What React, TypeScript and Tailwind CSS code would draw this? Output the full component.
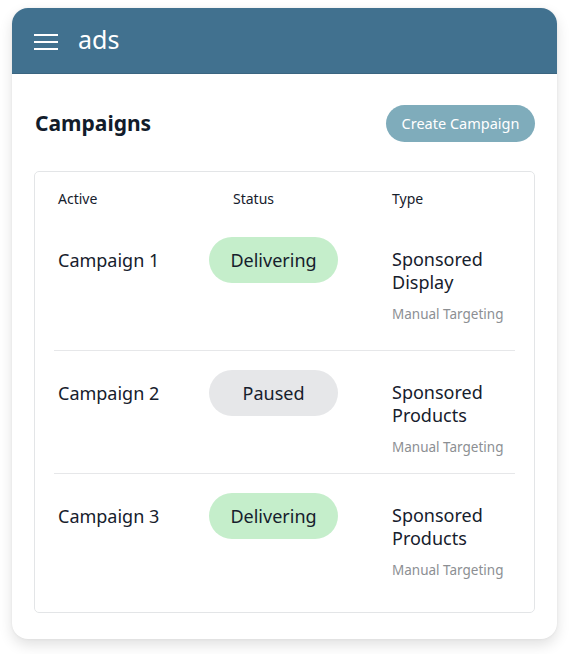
import React from 'react'

type Row = {
  name: string
  status: 'Delivering' | 'Paused'
  type: [string, string]
  targeting: string
}

const rows: Row[] = [
  { name: 'Campaign 1', status: 'Delivering', type: ['Sponsored', 'Display'], targeting: 'Manual Targeting' },
  { name: 'Campaign 2', status: 'Paused', type: ['Sponsored', 'Products'], targeting: 'Manual Targeting' },
  { name: 'Campaign 3', status: 'Delivering', type: ['Sponsored', 'Products'], targeting: 'Manual Targeting' },
]

function StatusPill({ status }: { status: Row['status'] }) {
  const color = status === 'Delivering' ? 'bg-[#c5eecb]' : 'bg-[#e6e7e9]'
  return (
    <div className={`${color} w-[129px] h-[46px] rounded-full flex items-center justify-center text-[18px] text-[#16202c]`}>
      {status}
    </div>
  )
}

export default function App() {
  return (
    <div className="min-h-[654px] bg-white pt-2 px-3 font-['Noto_Sans','Open_Sans',sans-serif]">
      <div className="rounded-[16px] overflow-hidden bg-white shadow-[0_6px_14px_rgba(0,0,0,0.12),0_0_3px_rgba(0,0,0,0.06)]">
        {/* header */}
        <div className="h-[66px] bg-[#41718f] border-b border-[#3a6580] flex items-center pl-[22px] gap-[20px]">
          <svg width="24" height="18" viewBox="0 0 24 18" className="mt-[2px]">
            <rect x="0" y="1" width="24" height="2" fill="white" />
            <rect x="0" y="8" width="24" height="2" fill="white" />
            <rect x="0" y="15" width="24" height="2" fill="white" />
          </svg>
          <span className="text-white text-[25px] leading-none pb-[2px]">ads</span>
        </div>

        {/* body */}
        <div className="px-[22px] pt-[31px] pb-[26px]">
          <div className="flex items-center justify-between pl-[1px]">
            <h1 className="text-[21px] font-bold text-[#121c2b]">Campaigns</h1>
            <button className="h-[37px] w-[149px] rounded-full bg-[#7facbb] text-white text-[14.5px]">
              Create Campaign
            </button>
          </div>

          <div className="mt-[29px] border border-[#e3e5e7] rounded-[5px] pb-[32px]">
            <div className="flex px-[23px] pt-[17px] pb-[8px] text-[14px] text-[#16202c] leading-[20px]">
              <div className="w-[175px]">Active</div>
              <div className="w-[159px]">Status</div>
              <div>Type</div>
            </div>

            {rows.map((r, i) => (
              <div
                key={r.name}
                className={`mx-[19px] flex pl-[4px] ${i === 0 ? 'pt-[20px] pb-[26px]' : 'pt-[19px]'} ${i === 1 ? 'pb-[16px]' : ''} ${i < rows.length - 1 ? 'border-b border-[#e6e7e9]' : ''}`}
              >
                <div className="w-[151px] h-[46px] flex items-center text-[18px] text-[#16202c]">{r.name}</div>
                <div className="w-[183px]">
                  <StatusPill status={r.status} />
                </div>
                <div className="pt-[11px]">
                  <div className="text-[18px] leading-[23px] text-[#16202c]">
                    <div>{r.type[0]}</div>
                    <div>{r.type[1]}</div>
                  </div>
                  <div className="mt-[10px] text-[13.5px] leading-[20px] text-[#8c8f93]">{r.targeting}</div>
                </div>
              </div>
            ))}
          </div>
        </div>
      </div>
    </div>
  )
}
